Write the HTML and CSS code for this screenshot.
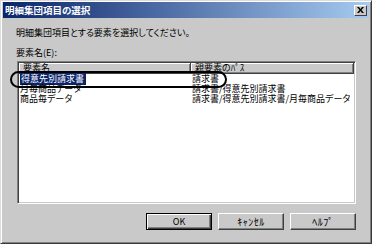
FILE: index.html
```html
<!DOCTYPE html>
<html lang="ja">
<head>
  <meta charset="UTF-8">
  <title>明細集団項目の選択</title>
  <link rel="stylesheet" href="styles.css">
</head>
<body>
  <div class="ventana">
    <div class="titulo">
      <span class="titulo-texto">明細集団項目の選択</span>
      <span class="cerrar">
        <svg width="7" height="6" viewBox="0 0 7 6"><path d="M0 0h2l1.5 2 1.5-2h2l-2.5 3 2.5 3h-2l-1.5-2-1.5 2h-2l2.5-3z" fill="#000"/></svg>
      </span>
    </div>

    <div class="contenido">
      <div class="intro">明細集団項目とする要素を選択してください。</div>
      <div class="etiqueta">要素名(<u>E</u>):</div>

      <div class="lista">
        <div class="cabecera">
          <div class="col-cab">要素名</div>
          <div class="col-cab">親要素のﾊﾟｽ</div>
        </div>
        <div class="fila">
          <div class="celda"><span class="sel">得意先別請求書</span></div>
          <div class="celda">請求書</div>
        </div>
        <div class="fila">
          <div class="celda">月毎商品データ</div>
          <div class="celda">請求書/得意先別請求書</div>
        </div>
        <div class="fila">
          <div class="celda">商品毎データ</div>
          <div class="celda">請求書/得意先別請求書/月毎商品データ</div>
        </div>
      </div>

      <div class="botones">
        <button class="boton boton-defecto">OK</button>
        <button class="boton boton-kana">ｷｬﾝｾﾙ</button>
        <button class="boton boton-kana">ﾍﾙﾌﾟ</button>
      </div>
    </div>

    <!-- marca a mano alrededor de la primera fila -->
    <div class="ovalo"></div>
  </div>
</body>
</html>
```

FILE: styles.css
```css
body {
  margin: 0;
  padding: 0;
  background-color: #c9c9c9;
  font-family: "Noto Sans CJK JP", sans-serif;
  font-size: 9px;
  font-feature-settings: "palt";
}

.ventana {
  position: relative;
  width: 372px;
  height: 244px;
  box-sizing: border-box;
  padding: 1px 2px 0 2px;
  background-color: #c9c9c9;
  border: 1px solid;
  border-color: #dcdcdc #3a3a3a #3a3a3a #dcdcdc;
  box-shadow: inset 1px 1px #ffffff, inset -1px -1px #808080;
}

.titulo {
  display: flex;
  align-items: center;
  justify-content: space-between;
  height: 16px;
  padding: 0 2px 0 2px;
  background: linear-gradient(to right, #0a246a, #a6caf0);
}

.titulo-texto {
  color: #fff;
  font-weight: bold;
  font-size: 9.5px;
  line-height: 12px;
}

.cerrar {
  display: flex;
  align-items: center;
  justify-content: center;
  width: 11px;
  height: 9px;
  background-color: #c9c9c9;
  border: 1px solid;
  border-color: #fff #404040 #404040 #fff;
}

.contenido {
  padding: 10px 13px 0 13px;
}

.intro {
  line-height: 10px;
  margin-bottom: 10px;
}

.etiqueta {
  line-height: 10px;
  margin-bottom: 3px;
}

.etiqueta u {
  text-decoration: none;
}

.lista {
  margin-left: 1px;
  height: 143px;
  box-sizing: border-box;
  background-color: #fff;
  border: 1px solid;
  border-color: #808080 #fff #fff #808080;
  box-shadow: inset 1px 1px #404040, inset -1px -1px #c9c9c9;
  padding: 1px;
}

.cabecera,
.fila {
  display: grid;
  grid-template-columns: 172px 1fr;
}

.col-cab {
  height: 11px;
  line-height: 10px;
  padding-left: 4px;
  background-color: #c9c9c9;
  box-sizing: border-box;
  border-right: 1px solid #404040;
  border-bottom: 1px solid #404040;
  box-shadow: inset 1px 1px #fff, inset -1px -1px #808080;
  white-space: nowrap;
}

.fila {
  height: 10px;
  line-height: 10px;
}

.celda {
  white-space: nowrap;
  padding-left: 1px;
}

.sel {
  background-color: #0a246a;
  color: #fff;
  padding: 0 2px 0 1px;
}

.botones {
  display: flex;
  justify-content: flex-end;
  gap: 6px;
  margin-top: 9px;
}

.boton {
  width: 66px;
  height: 17px;
  padding: 0;
  font-family: "Noto Sans CJK JP", sans-serif;
  font-size: 9px;
  color: #000;
  background-color: #c9c9c9;
  border: 1px solid;
  border-color: #fff #404040 #404040 #fff;
  box-shadow: inset -1px -1px #808080;
}

.boton-kana {
  font-size: 10px;
  letter-spacing: 0.5px;
}

.boton-defecto {
  border: 1px solid #000;
  box-shadow: inset 1px 1px #fff, inset -1px -1px #404040, inset -2px -2px #808080;
}

.ovalo {
  position: absolute;
  left: 9px;
  top: 70px;
  width: 217px;
  height: 17px;
  box-sizing: border-box;
  border: 2px solid #000;
  border-radius: 9px;
}
```
